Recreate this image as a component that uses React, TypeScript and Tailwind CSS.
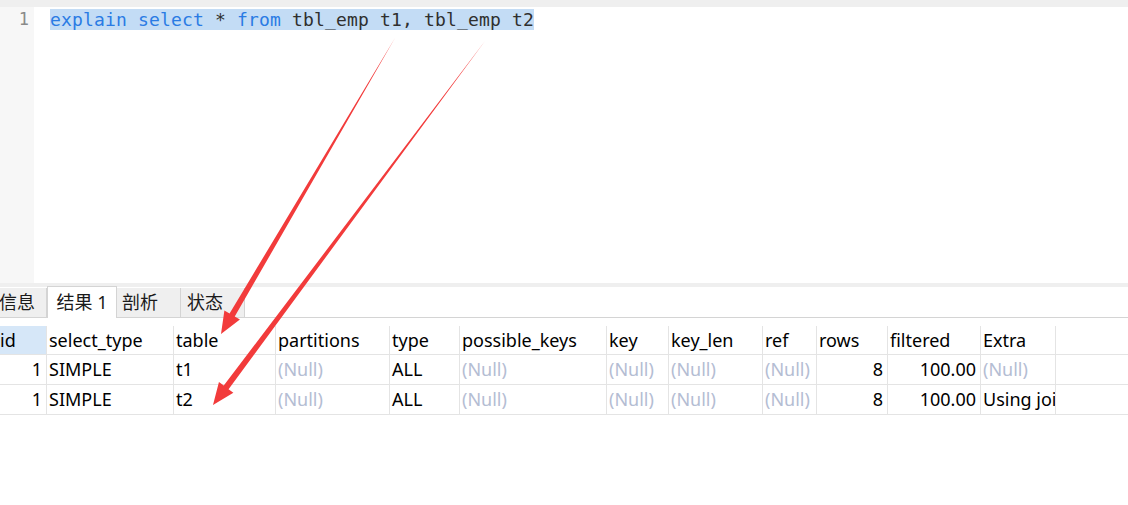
import React from "react"

const cols = [
  { name: "id", w: 47, right: true },
  { name: "select_type", w: 127 },
  { name: "table", w: 102 },
  { name: "partitions", w: 114 },
  { name: "type", w: 70 },
  { name: "possible_keys", w: 147 },
  { name: "key", w: 62 },
  { name: "key_len", w: 94 },
  { name: "ref", w: 54 },
  { name: "rows", w: 71, right: true },
  { name: "filtered", w: 93, right: true },
  { name: "Extra", w: 75 },
]

const rows: (string | null)[][] = [
  ["1", "SIMPLE", "t1", null, "ALL", null, null, null, null, "8", "100.00", null],
  ["1", "SIMPLE", "t2", null, "ALL", null, null, null, null, "8", "100.00", "Using join buffer (Block Nested Loop)"],
]

// tapered red arrow, thin at the tail, thick near the head
function arrowPoints(sx: number, sy: number, tx: number, ty: number) {
  const dx = tx - sx
  const dy = ty - sy
  const len = Math.hypot(dx, dy)
  const ux = dx / len
  const uy = dy / len
  const px = -uy
  const py = ux
  const headLen = 22
  const headW = 9
  const shaftW = 3
  const bx = tx - ux * headLen
  const by = ty - uy * headLen
  const pts = [
    [sx, sy],
    [bx + px * shaftW, by + py * shaftW],
    [bx + px * headW, by + py * headW],
    [tx, ty],
    [bx - px * headW, by - py * headW],
    [bx - px * shaftW, by - py * shaftW],
  ]
  return pts.map((p) => p.join(",")).join(" ")
}

export default function App() {
  return (
    <div className="relative w-[1128px] h-[505px] overflow-hidden bg-white" style={{ fontFamily: '"Noto Sans", "Noto Sans CJK SC", sans-serif' }}>
      <div className="h-[7px] bg-[#efefef]" />

      {/* editor */}
      <div className="flex h-[276px]">
        <div className="w-[34px] bg-[#f7f7f7] pr-[5px] pt-[2px] text-right font-['DejaVu_Sans_Mono',monospace] text-[17px] leading-[21px] text-[#8a8a8a]">1</div>
        <div className="pl-[16px] pt-[1px]">
          <div className="inline-block bg-[#c3dcf5] font-['DejaVu_Sans_Mono',monospace] text-[18px] leading-[21px] tracking-[0.16px] text-[#2f2f2f] whitespace-pre">
            <span className="text-[#2a7be4]">explain</span> <span className="text-[#2a7be4]">select</span> * <span className="text-[#2a7be4]">from</span> tbl_emp t1, tbl_emp t2
          </div>
        </div>
      </div>

      <div className="h-[4px] bg-[#efefef]" />

      {/* result tabs */}
      <div className="flex h-[31px] items-end border-b border-[#d4d4d4]">
        <div className="-ml-[12px] flex h-[29px] w-[59px] items-center justify-end border-r border-[#d4d4d4] bg-[#efefef] pr-[11px] text-[18px] text-[#1a1a1a]">信息</div>
        <div className="-mb-px flex h-[32px] w-[70px] items-center justify-center border-x border-t border-[#d4d4d4] bg-white text-[18px] text-[#1a1a1a]">结果 1</div>
        <div className="flex h-[29px] w-[64px] items-center border-r border-[#d4d4d4] bg-[#efefef] pl-[5px] text-[18px] text-[#1a1a1a]">剖析</div>
        <div className="flex h-[29px] w-[64px] items-center border-r border-[#d4d4d4] bg-[#efefef] pl-[6px] text-[18px] text-[#1a1a1a]">状态</div>
      </div>

      {/* result grid */}
      <div className="mt-[8px] text-[18px] leading-[28px]">
        <div className="flex border-b border-[#e4e4e4]">
          {cols.map((c, i) => (
            <div
              key={c.name}
              className={
                i === 0
                  ? "h-[28px] shrink-0 overflow-hidden whitespace-nowrap border-r border-[#e4e4e4] bg-[#d6e7f8] pl-0 text-black"
                  : "h-[28px] shrink-0 overflow-hidden whitespace-nowrap border-r border-[#e4e4e4] pl-[2px] text-black"
              }
              style={{ width: c.w }}
            >
              {c.name}
            </div>
          ))}
        </div>
        {rows.map((r, ri) => (
          <div key={ri} className="flex border-b border-[#e4e4e4]">
            {r.map((v, i) => (
              <div
                key={i}
                className={
                  (cols[i].right ? "pr-[4px] text-right " : "pl-[2px] ") +
                  "h-[29px] shrink-0 overflow-hidden whitespace-nowrap border-r border-[#e4e4e4] " +
                  (v === null ? "text-[#b4bdd3]" : "text-black")
                }
                style={{ width: cols[i].w }}
              >
                {v === null ? "(Null)" : v}
              </div>
            ))}
          </div>
        ))}
      </div>

      {/* annotation arrows */}
      <svg className="pointer-events-none absolute left-0 top-0" width="1128" height="505">
        <polygon points={arrowPoints(395, 38, 221, 334)} fill="#f23b3b" />
        <polygon points={arrowPoints(485, 41, 213, 405)} fill="#f23b3b" />
      </svg>
    </div>
  )
}
